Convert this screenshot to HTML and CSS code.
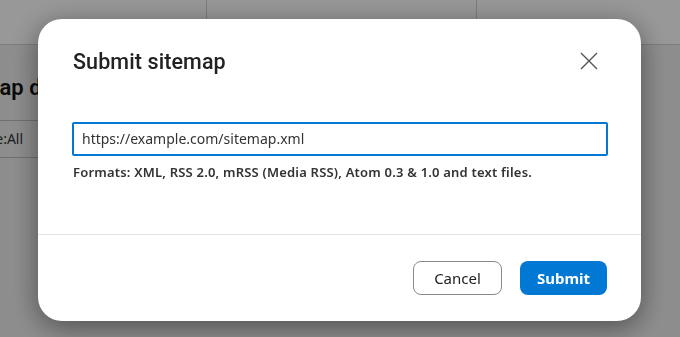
FILE: index.html
```html
<!DOCTYPE html>
<html>
<head>
<meta charset="utf-8">
<link rel="stylesheet" href="styles.css">
</head>
<body>
<div class="page">
  <div class="stats">
    <div class="stat">Submitted</div>
    <div class="stat">pages</div>
    <div class="stat">queries</div>
  </div>
  <h2 class="page-title">Sitemap details</h2>
  <div class="filter">Type:All</div>
</div>
<div class="overlay">
  <div class="modal" role="dialog">
    <div class="modal-head">
      <h1 class="modal-title">Submit sitemap</h1>
      <button class="close" aria-label="Close">
        <svg width="18" height="18" viewBox="0 0 18 18"><path d="M1 1L17 17M17 1L1 17" stroke="#555" stroke-width="1.4" fill="none"/></svg>
      </button>
    </div>
    <div class="modal-body">
      <div class="input">https://example.com/sitemap.xml</div>
      <p class="hint">Formats: XML, RSS 2.0, mRSS (Media RSS), Atom 0.3 &amp; 1.0 and text files.</p>
    </div>
    <div class="modal-foot">
      <button class="btn btn-cancel">Cancel</button>
      <button class="btn btn-submit">Submit</button>
    </div>
  </div>
</div>
</body>
</html>
```
FILE: styles.css
```css
html, body { margin: 0; padding: 0; }
body {
  width: 680px;
  height: 337px;
  overflow: hidden;
  background: #ececec;
  font-family: "Noto Sans", "Open Sans", sans-serif;
  color: #222;
}
.page { width: 680px; }
.stats {
  display: grid;
  grid-template-columns: 207px 270px 1fr;
  height: 44px;
  background: #fdfdfd;
  border-bottom: 1px solid #d0d0d0;
}
.stat {
  border-right: 1px solid #d0d0d0;
  padding: 0 11px;
  margin-top: -23px;
  height: 67px;
  line-height: 22px;
  font-size: 16px;
  font-weight: 700;
  color: #111;
  overflow: hidden;
  white-space: nowrap;
}
.stat:first-child { color: transparent; }
.stat:last-child { border-right: none; }
.page-title {
  margin: 30px 0 0 -58px;
  font-family: "Roboto", sans-serif;
  font-size: 22px;
  font-weight: 600;
  color: #111;
}
.filter {
  margin: 20px 0 0 -48px;
  width: 120px;
  height: 36px;
  line-height: 36px;
  border-top: 1px solid #bbb;
  border-bottom: 1px solid #bbb;
  font-size: 14px;
  color: #333;
  padding-left: 20px;
}
.overlay {
  position: fixed;
  inset: 0;
  background: rgba(0, 0, 0, 0.4);
  display: flex;
  justify-content: center;
  align-items: flex-start;
  padding: 19px 1px 0 0;
}
.modal {
  width: 603px;
  height: 302px;
  background: #fff;
  border-radius: 24px;
  box-shadow: 0 6px 28px rgba(0, 0, 0, 0.45);
  display: flex;
  flex-direction: column;
}
.modal-head {
  display: flex;
  justify-content: space-between;
  align-items: center;
  padding: 28px 42px 0 35px;
  height: 28px;
}
.modal-title {
  margin: 0;
  font-family: "Roboto", sans-serif;
  font-size: 21.5px;
  font-weight: 500;
  color: #222;
  letter-spacing: 0.1px;
}
.close {
  border: none;
  background: none;
  padding: 0;
  width: 20px;
  height: 20px;
  display: flex;
  align-items: center;
  justify-content: center;
}
.modal-body {
  padding: 47px 33px 0 34px;
  flex: 1;
  border-bottom: 1px solid #e3e3e3;
}
.input {
  height: 30px;
  border: 2px solid #0078d4;
  border-radius: 2px;
  padding: 0 8px;
  font-size: 14px;
  line-height: 30px;
  color: #333;
}
.hint {
  margin: 7px 0 0 1px;
  font-size: 13px;
  font-weight: 600;
  letter-spacing: 0.2px;
  color: #333;
}
.modal-foot {
  display: flex;
  justify-content: flex-end;
  gap: 18px;
  padding: 26px 34px 0 0;
  height: 60px;
}
.btn {
  height: 34px;
  border-radius: 8px;
  font-family: "Noto Sans", "Open Sans", sans-serif;
  font-size: 15px;
  cursor: pointer;
}
.btn-cancel {
  width: 89px;
  background: #fff;
  border: 1px solid #8a8a8a;
  color: #222;
}
.btn-submit {
  width: 87px;
  background: #0078d4;
  border: none;
  color: #fff;
  font-weight: 700;
}
```
